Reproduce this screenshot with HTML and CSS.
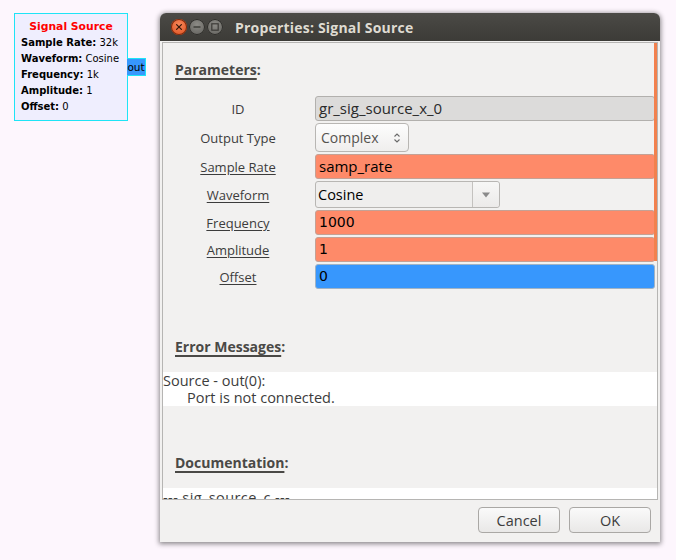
FILE: index.html
```html
<!DOCTYPE html>
<html>
<head>
<meta charset="utf-8">
<link rel="stylesheet" href="styles.css">
</head>
<body>
<div class="canvas">
  <div class="block">
    <div class="block-title">Signal Source</div>
    <div class="block-line"><b>Sample Rate:</b> 32k</div>
    <div class="block-line"><b>Waveform:</b> Cosine</div>
    <div class="block-line"><b>Frequency:</b> 1k</div>
    <div class="block-line"><b>Amplitude:</b> 1</div>
    <div class="block-line"><b>Offset:</b> 0</div>
  </div>
  <div class="port">out</div>

  <div class="window">
    <div class="titlebar">
      <div class="wbtn close"><svg width="16" height="16" viewBox="0 0 16 16"><path d="M5.6 5.6 L10.4 10.4 M10.4 5.6 L5.6 10.4" stroke="#3a1a0c" stroke-width="1.3" stroke-linecap="round"/></svg></div>
      <div class="wbtn"><svg width="16" height="16" viewBox="0 0 16 16"><path d="M4.5 8 H11.5" stroke="#3c3b37" stroke-width="1.4"/></svg></div>
      <div class="wbtn"><svg width="16" height="16" viewBox="0 0 16 16"><rect x="4.8" y="4.8" width="6.4" height="6.4" fill="none" stroke="#3c3b37" stroke-width="1.2"/></svg></div>
      <div class="wtitle">Properties: Signal Source</div>
    </div>
    <div class="wbody">
      <div class="scrollwin">
        <div class="viewport">
          <div class="heading first"><u>Parameters</u>:</div>
          <div class="params">
            <div class="plabel r25">ID</div>
            <div class="field"><div class="entry insensitive">gr_sig_source_x_0</div></div>

            <div class="plabel r29">Output Type</div>
            <div class="field"><div class="spin">Complex<svg class="spinarrows" width="8" height="12" viewBox="0 0 8 12"><path d="M1.5 4.5 L4 2 L6.5 4.5" fill="none" stroke="#6a6a6a" stroke-width="1.1"/><path d="M1.5 7.5 L4 10 L6.5 7.5" fill="none" stroke="#6a6a6a" stroke-width="1.1"/></svg></div></div>

            <div class="plabel r25"><u>Sample Rate</u></div>
            <div class="field"><div class="entry salmon">samp_rate</div></div>

            <div class="plabel r27"><u>Waveform</u></div>
            <div class="field"><div class="combo"><span class="combo-text">Cosine</span><span class="combo-btn"><svg width="10" height="6" viewBox="0 0 10 6"><path d="M1 0.5 H9 L5 5.5 Z" fill="#8a8a8a"/></svg></span></div></div>

            <div class="plabel r25"><u>Frequency</u></div>
            <div class="field"><div class="entry salmon num">1000</div></div>

            <div class="plabel r25"><u>Amplitude</u></div>
            <div class="field"><div class="entry salmon num">1</div></div>

            <div class="plabel r25"><u>Offset</u></div>
            <div class="field"><div class="entry blue num">0</div></div>
          </div>

          <div class="heading err"><u>Error Messages</u>:</div>
          <div class="textbox">
            <div>Source - out(0):</div>
            <div class="indent">Port is not connected.</div>
          </div>

          <div class="heading doc"><u>Documentation</u>:</div>
          <div class="textbox doc-box">
            <div>--- sig_source_c ---</div>
          </div>
        </div>
        <div class="overlay-scroll"></div>
      </div>
      <div class="actions">
        <button class="btn">Cancel</button>
        <button class="btn">OK</button>
      </div>
    </div>
  </div>
</div>
</body>
</html>
```

FILE: styles.css
```css
html, body {
  margin: 0;
  padding: 0;
  background: #fdf6fd;
  width: 676px;
  height: 560px;
  overflow: hidden;
}

.canvas {
  position: relative;
  width: 676px;
  height: 560px;
  font-family: "Open Sans", "DejaVu Sans", sans-serif;
}

/* flow-graph block */
.block {
  position: absolute;
  left: 14px;
  top: 13px;
  width: 106px;
  height: 101px;
  padding: 5px 0 0 6px;
  background: #efeefe;
  border: 1px solid #1ee4f6;
  font-family: "DejaVu Sans", sans-serif;
  font-size: 10px;
  color: #000;
}

.block-title {
  height: 16px;
  line-height: 16px;
  text-align: center;
  margin-left: -6px;
  color: #ff0000;
  font-weight: bold;
  font-size: 10.8px;
}

.block-line {
  height: 16px;
  line-height: 16px;
  white-space: nowrap;
}

.port {
  position: absolute;
  left: 127px;
  top: 58px;
  width: 18px;
  height: 16px;
  line-height: 16px;
  background: #3797fd;
  border: 1px solid #1ee4f6;
  border-left: none;
  font-family: "DejaVu Sans", sans-serif;
  font-size: 10.5px;
  color: #000;
  text-align: center;
}

/* dialog window */
.window {
  position: absolute;
  left: 160px;
  top: 13px;
  width: 500px;
  height: 529px;
  background: #f2f1f0;
  border-radius: 6px 6px 0 0;
  box-shadow: 0 1px 5px 1px rgba(0, 0, 0, 0.45);
  display: flex;
  flex-direction: column;
}

.titlebar {
  height: 28px;
  flex: none;
  display: flex;
  align-items: center;
  padding-left: 11px;
  gap: 2px;
  background: linear-gradient(#4b4a46, #3c3b37);
  border-radius: 6px 6px 0 0;
}

.wbtn {
  width: 16px;
  height: 16px;
  border-radius: 50%;
  background: radial-gradient(circle at 50% 35%, #8c8b86, #5f5e5a);
  box-shadow: inset 0 0 0 1px #2f2e2b;
  display: flex;
}

.wbtn.close {
  background: radial-gradient(circle at 50% 35%, #f7875a, #dc4d1c);
  box-shadow: inset 0 0 0 1px #7b2a0d;
}

.wtitle {
  margin-left: 10px;
  color: #dfdbd2;
  font-weight: bold;
  font-size: 14px;
  letter-spacing: 0.2px;
}

.wbody {
  flex: 1;
  display: flex;
  flex-direction: column;
  padding: 1px 2px 0 2px;
}

.scrollwin {
  position: relative;
  height: 456px;
  border: 1px solid #b6b5b3;
  flex: none;
}

.viewport {
  height: 456px;
  overflow: hidden;
  display: flex;
  flex-direction: column;
}

.overlay-scroll {
  position: absolute;
  right: 0;
  top: 0;
  width: 3px;
  height: 218px;
  background: #f2814e;
}

.heading {
  height: 20px;
  line-height: 20px;
  padding-left: 12px;
  font-weight: bold;
  font-size: 14px;
  color: #4a4946;
  flex: none;
}

.heading u {
  text-decoration-thickness: 2px;
  text-underline-offset: 3px;
}

.heading.first { margin-top: 17px; }
.heading.err { margin-top: 48px; }
.heading.doc { margin-top: 47px; }

.params {
  margin-top: 16px;
  display: grid;
  grid-template-columns: 150px 1fr;
  column-gap: 2px;
  row-gap: 2px;
  padding-right: 2px;
  flex: none;
}

.plabel {
  display: flex;
  align-items: center;
  justify-content: center;
  font-size: 13px;
  color: #3c3c3c;
}

.plabel u {
  text-underline-offset: 2px;
}

.r25 { height: 25px; }
.r27 { height: 27px; }
.r29 { height: 29px; }

.field {
  display: flex;
  align-items: stretch;
}

.entry {
  flex: 1;
  box-sizing: border-box;
  border: 1px solid #b2b0ad;
  border-radius: 3px;
  padding-left: 3px;
  font-size: 15px;
  line-height: 23px;
  color: #000;
}

.entry.insensitive {
  background: #dcdbda;
  color: #2a2a2a;
}

.entry.salmon {
  background: #fe8a69;
  border-color: #c4a195;
}

.entry.blue {
  background: #3797fd;
  border-color: #a1b3c4;
}

.entry.num {
  font-family: "DejaVu Sans", sans-serif;
  font-size: 14px;
}

.spin {
  width: 94px;
  box-sizing: border-box;
  border: 1px solid #b8b6b3;
  border-radius: 4px;
  background: linear-gradient(#fdfdfd, #efeeed);
  display: flex;
  align-items: center;
  padding-left: 5px;
  font-size: 14px;
  color: #55534f;
}

.spinarrows {
  margin-left: auto;
  margin-right: 7px;
}

.combo {
  width: 185px;
  box-sizing: border-box;
  border: 1px solid #b8b6b3;
  border-radius: 3px;
  background: #efeeed;
  display: flex;
  align-items: stretch;
}

.combo-text {
  flex: 1;
  display: flex;
  align-items: center;
  padding-left: 2px;
  font-size: 14.5px;
  color: #000;
}

.combo-btn {
  width: 26px;
  border-left: 1px solid #c4c2bf;
  background: linear-gradient(#f7f7f6, #eceae9);
  border-radius: 0 3px 3px 0;
  display: flex;
  align-items: center;
  justify-content: center;
}

.textbox {
  margin-top: 15px;
  background: #ffffff;
  font-size: 14.5px;
  line-height: 17px;
  color: #3c3c3c;
  flex: none;
}

.textbox .indent {
  padding-left: 24px;
}

.doc-box {
  flex: 1;
  line-height: 20px;
  letter-spacing: 0.4px;
}

.actions {
  display: flex;
  justify-content: flex-end;
  gap: 9px;
  padding: 7px 7px 0 0;
}

.btn {
  width: 82px;
  height: 26px;
  box-sizing: border-box;
  border: 1px solid #aaa8a5;
  border-radius: 4px;
  background: linear-gradient(#fafafa, #e9e8e7);
  font-family: "Open Sans", sans-serif;
  font-size: 14.5px;
  color: #3c3c3c;
  padding: 0;
}
```
